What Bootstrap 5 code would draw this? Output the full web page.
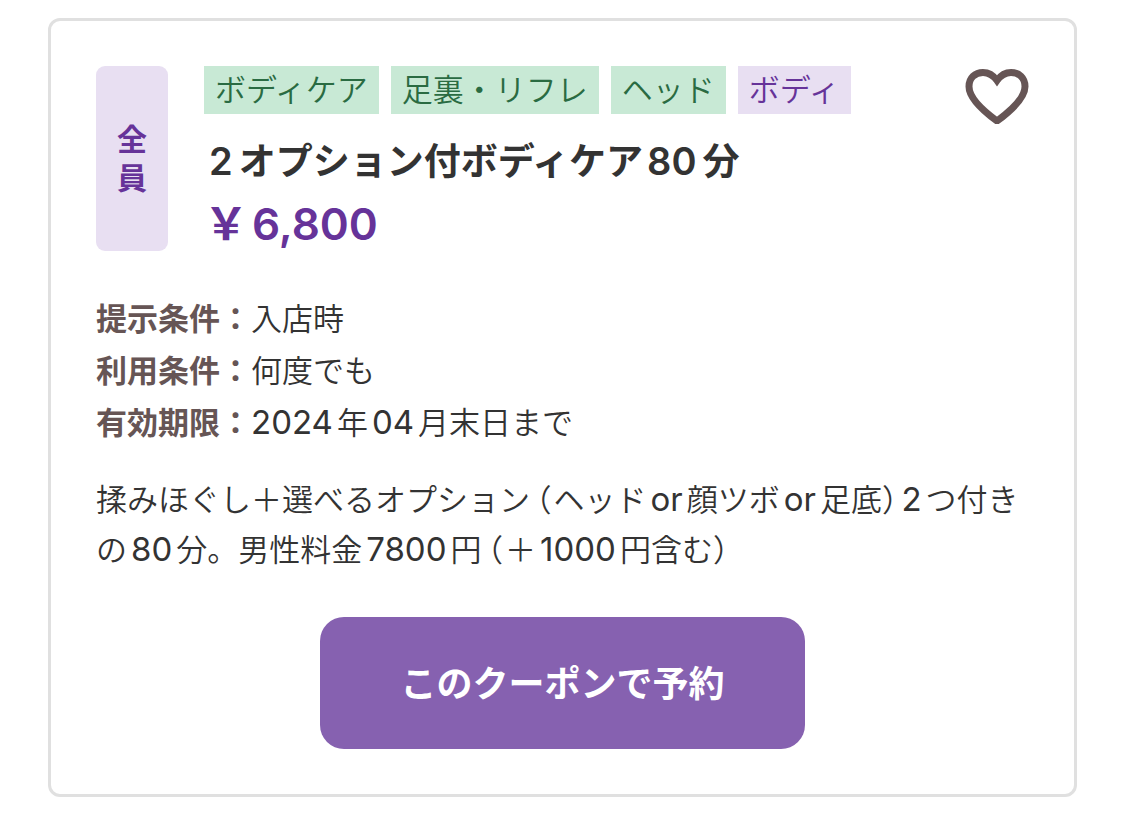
<!DOCTYPE html>
<html lang="ja">
<head>
<meta charset="utf-8">
<meta name="viewport" content="width=device-width, initial-scale=1">
<title>クーポン</title>
<link rel="stylesheet" href="https://cdn.jsdelivr.net/npm/bootstrap@5.3.0/dist/css/bootstrap.min.css">
<style>
body{font-family:Inter,"Noto Sans CJK JP",sans-serif;color:#333;background:#fff;font-size:31px;font-weight:350}
.page-wrap{padding:18px 48px 32px}
.coupon{border:3px solid #e0e0e0;border-radius:12px;--bs-card-spacer-x:45px;--bs-card-spacer-y:45px}
.head-row{gap:36px;margin-bottom:42px}
.target{width:72px;border-radius:9px;background:#e8dff2;color:#639;font-size:30px;line-height:39px;font-weight:700}
.tags{gap:12px}
.tag{background:#c8e9d5;color:#2a6b42;line-height:48px;padding:0 11px}
.tag-body{background:#e8dff2;color:#639}
.coupon-title{font-size:37px;line-height:54px;font-weight:600;margin:21px 0 0;padding-left:5px}
.price{font-size:44px;line-height:54px;font-weight:600;color:#639;margin:8px 0 0;gap:4px}
.terms{line-height:52px;margin:0 0 26px}
.terms dt{color:#655;font-weight:700}
.detail{line-height:50px;margin:0 0 42px}
.latin{margin:0 4px;font-size:33px;line-height:1;font-weight:400}
.latin-first{margin-left:0}
.coupon-title .latin{font-size:38px;font-weight:600;margin-right:6px}
.paren{font-feature-settings:"halt"}
.paren-open{margin:0 2px 0 6px}
.fav svg{width:64px;height:58px}
.reserve,.reserve:hover{width:52%;padding:40px 0 38px;border-radius:24px;background:#8661b0;color:#fff;font-size:36px;line-height:54px;font-weight:700;border:0}
</style>
</head>
<body>
<main class="page-wrap">
<article class="card coupon">
<div class="card-body">
<div class="head-row d-flex">
<div class="target d-flex flex-column align-items-center justify-content-center flex-shrink-0"><span>全</span><span>員</span></div>
<div class="flex-grow-1">
<div class="tags d-flex flex-wrap">
<span class="tag">ボディケア</span><span class="tag">足裏・リフレ</span><span class="tag">ヘッド</span><span class="tag tag-body">ボディ</span>
</div>
<h1 class="coupon-title"><span class="latin latin-first">2</span>オプション付ボディケア<span class="latin">80</span>分</h1>
<p class="price d-flex"><span>￥</span><span>6,800</span></p>
</div>
<button type="button" class="fav btn p-0 border-0 align-self-start" aria-label="お気に入り">
<svg class="d-block" viewBox="0 0 64 58" fill="none" stroke="#655" stroke-width="7"><path d="M32 14.500C28 9 23 6.500 18 6.500C10 6.500 4 12 4 20.500C4 31 17 44 32 55C47 44 60 31 60 20.500C60 12 54 6.500 46 6.500C41 6.500 36 9 32 14.500Z"/></svg>
</button>
</div>
<dl class="terms">
<div class="d-flex"><dt>提示条件：</dt><dd class="m-0">入店時</dd></div>
<div class="d-flex"><dt>利用条件：</dt><dd class="m-0">何度でも</dd></div>
<div class="d-flex"><dt>有効期限：</dt><dd class="m-0"><span class="latin latin-first">2024</span>年<span class="latin">04</span>月末日まで</dd></div>
</dl>
<p class="detail">揉みほぐし＋選べるオプション<span class="paren paren-open">（</span>ヘッド<span class="latin">or</span>顔ツボ<span class="latin">or</span>足底<span class="paren">）</span><span class="latin">2</span>つ付きの<span class="latin">80</span>分。男性料金<span class="latin">7800</span>円<span class="paren paren-open">（</span>＋<span class="latin">1000</span>円含む<span class="paren">）</span></p>
<div class="text-center"><button type="button" class="reserve btn">このクーポンで予約</button></div>
</div>
</article>
</main>
<script src="https://cdn.jsdelivr.net/npm/bootstrap@5.3.0/dist/js/bootstrap.bundle.min.js"></script>
</body>
</html>
